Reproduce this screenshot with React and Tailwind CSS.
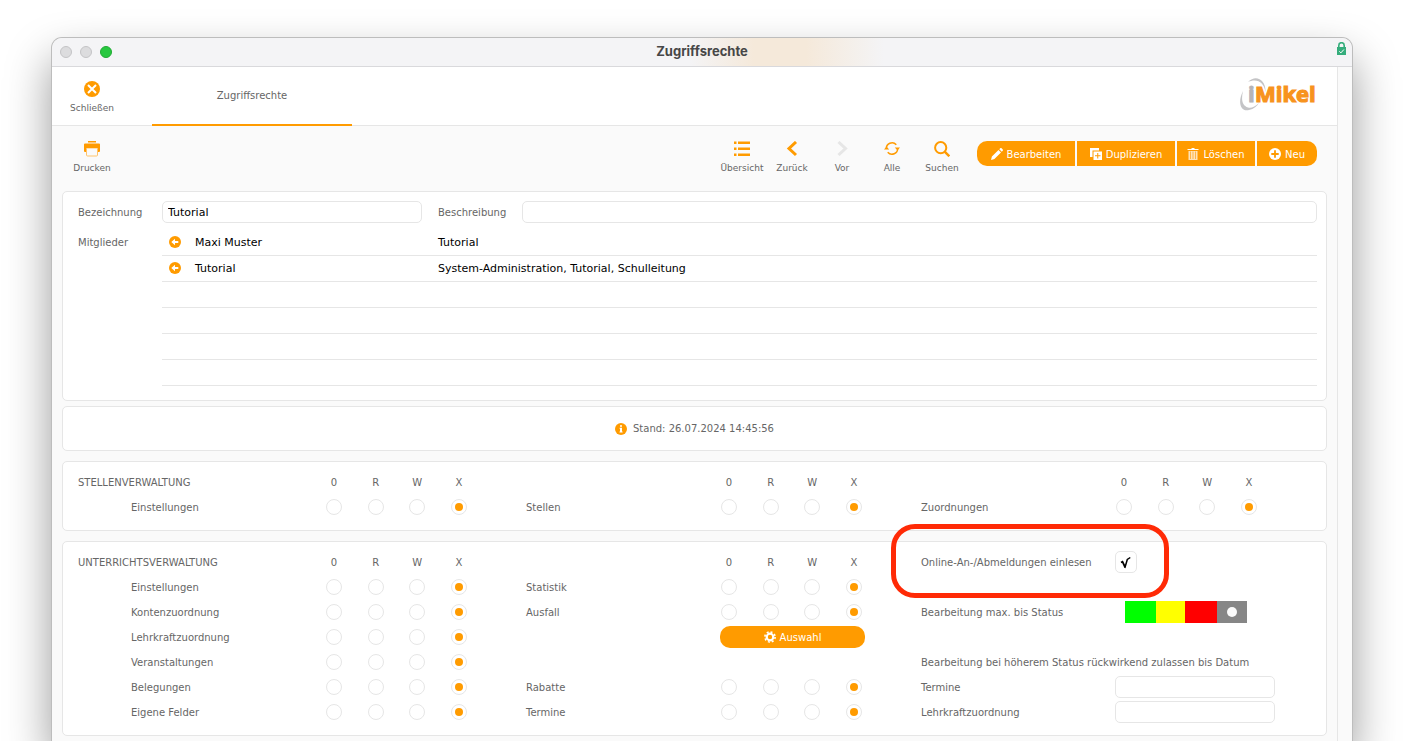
import React, { useState } from 'react'
import clsx from 'clsx'

const LEVELS = ['0', 'R', 'W', 'X']

const members = [
  { name: 'Maxi Muster', groups: 'Tutorial' },
  { name: 'Tutorial', groups: 'System-Administration, Tutorial, Schulleitung' },
  null,
  null,
  null,
  null
]

const statusColors = [
  { id: 'grün', className: 'w-[31px] bg-[#00ff00]' },
  { id: 'gelb', className: 'w-[29px] bg-[#ffff00]' },
  { id: 'rot', className: 'w-8 bg-[#ff0000]' },
  { id: 'grau', className: 'w-[30px] bg-[#868686]' }
]

function CloseIcon() {
  return (
    <svg viewBox="0 0 16 16" className="size-4">
      <circle cx="8" cy="8" r="8" fill="#ff9b00" />
      <path d="M4 4l8 8M12 4l-8 8" stroke="#fff" strokeWidth="2" />
    </svg>
  )
}

function PrintIcon() {
  return (
    <svg viewBox="0 0 16 16" className="size-4">
      <path d="M4 0h8v1.500H4z" fill="#ff9b00" />
      <path d="M1 2.500h14a1 1 0 0 1 1 1V10a1 1 0 0 1-1 1H1a1 1 0 0 1-1-1V3.500a1 1 0 0 1 1-1z" fill="#ff9b00" />
      <path d="M2.500 7h11v7a1 1 0 0 1-1 1h-9a1 1 0 0 1-1-1z" fill="#fafafa" stroke="#ffc46b" />
      <path d="M2 6.500h12" stroke="#ff9b00" />
    </svg>
  )
}

function ListIcon() {
  return (
    <svg viewBox="0 0 16 16" className="size-4" fill="#ff9b00">
      <path d="M0 .5h2.500V3H0zM4 .5h12V3H4zM0 6.500h2.500V9H0zM4 6.500h12V9H4zM0 12.500h2.500V15H0zM4 12.500h12V15H4z" />
    </svg>
  )
}

function ChevronIcon({ next = false }) {
  return (
    <svg viewBox="0 0 16 16" className="size-4" fill="none" strokeWidth="3">
      {next
        ? <path d="M4.500 1L11.500 7.500l-7 6.500" stroke="#e6e6e6" />
        : <path d="M12 1L5 7.500l7 6.500" stroke="#ff9b00" />}
    </svg>
  )
}

function ReloadIcon() {
  return (
    <svg viewBox="0 0 16 16" className="size-4" fill="none" stroke="#ff9b00" strokeWidth="1.500">
      <path d="M2.400 8A5.700 5.700 0 0 1 12.300 3.700M13.600 7A5.700 5.700 0 0 1 3.700 11.300" />
      <path d="M0 8.500l2.500-3 2.700 3zM10.800 6.500l2.700 3L16 6.500z" fill="#ff9b00" stroke="none" />
    </svg>
  )
}

function SearchIcon() {
  return (
    <svg viewBox="0 0 16 16" className="size-4" fill="none" stroke="#ff9b00" strokeWidth="2">
      <circle cx="6.700" cy="6.700" r="5.600" />
      <path d="M10.700 10.700l4.600 4.600" strokeWidth="2.400" />
    </svg>
  )
}

function PencilIcon() {
  return (
    <svg viewBox="0 0 12 12" className="size-3" fill="#fff">
      <path d="M0 12l.9-3.400 6.600-6.600 2.500 2.500L3.400 11.100zM8.300 1.200L9.200.3a1 1 0 0 1 1.400 0l1.100 1.100a1 1 0 0 1 0 1.400l-.9.9z" />
    </svg>
  )
}

function DuplicateIcon() {
  return (
    <svg viewBox="0 0 12 12" className="size-3">
      <path d="M0 0h9v2.500H2.500V9H0z" fill="#fff" />
      <path d="M3.500 3.500H12V12H3.500z" fill="#fff" />
      <path d="M7.750 5v5.500M5 7.750h5.500" stroke="#ff9b00" />
    </svg>
  )
}

function TrashIcon() {
  return (
    <svg viewBox="0 0 12 12" className="size-3">
      <path d="M.5 1.500h11M4.500.5h3" stroke="#fff" />
      <path d="M1.500 3h9v9h-9z" fill="#ffe3b8" />
      <path d="M3.500 3.500V11M6 3.500V11M8.500 3.500V11" stroke="#ffb545" />
    </svg>
  )
}

function PlusIcon() {
  return (
    <svg viewBox="0 0 12 12" className="size-3">
      <circle cx="6" cy="6" r="6" fill="#fff" />
      <path d="M6 2.300v7.400M2.300 6h7.400" stroke="#ff9b00" strokeWidth="1.800" />
    </svg>
  )
}

function BackIcon() {
  return (
    <svg viewBox="0 0 12 12" className="size-3">
      <circle cx="6" cy="6" r="6" fill="#ff9b00" />
      <path d="M2.300 6L6 2.800V5h3.300v2H6v2.200z" fill="#fff" />
    </svg>
  )
}

function InfoIcon() {
  return (
    <svg viewBox="0 0 12 12" className="size-3">
      <circle cx="6" cy="6" r="6" fill="#ff9b00" />
      <path d="M5 2.200h2v1.600H5zM4.600 4.800H7v3.700h.6v1H4.500v-1H5V5.800h-.4z" fill="#fff" />
    </svg>
  )
}

function GearIcon() {
  return (
    <svg viewBox="0 0 12 12" className="size-3" fill="none" stroke="#fff">
      <circle cx="6" cy="6" r="3.300" strokeWidth="2.200" />
      <circle cx="6" cy="6" r="5.100" strokeWidth="1.600" strokeDasharray="2 2" />
    </svg>
  )
}

function LockIcon() {
  return (
    <svg viewBox="0 0 9 13" className="h-[13px] w-[9px]">
      <path d="M1.800 6V3.400a2.700 2.700 0 0 1 5.400 0V6" fill="none" stroke="#35ad7c" strokeWidth="1.600" />
      <path d="M0 5h9v8H0z" fill="#35ad7c" />
      <path d="M2.300 9.300l1.600 1.600 3-3.400" fill="none" stroke="#fff" />
    </svg>
  )
}

function Logo() {
  return (
    <svg viewBox="0 0 77 36" className="h-9 w-[77px]" role="img" aria-label="iMikel">
      <path d="M8 6C16-2 26 4 25.500 16 24 6 17 2 8 6z" fill="#c4c4c6" />
      <path d="M3 15C-3 27 1 36 9 34c5-1 8-4 10-7-4 4-8 5.500-11 4.500-6-2-7-8-5-16.500z" fill="#c4c4c6" />
      <text x="8" y="26" fontFamily="Open Sans, sans-serif" fontWeight="700" fontSize="22" fill="#b4b4b8" stroke="#b4b4b8">i</text>
      <text x="15" y="26" fontFamily="Open Sans, sans-serif" fontWeight="700" fontSize="22" fill="#f7931e" stroke="#f7931e" strokeWidth="1.200">Mikel</text>
    </svg>
  )
}

function ToolButton({ icon, children, className, disabled }) {
  return (
    <button type="button" disabled={disabled} className={clsx('flex flex-col items-center gap-[3px] text-[9px] whitespace-nowrap', className)}>
      {icon}
      <span className="leading-4">{children}</span>
    </button>
  )
}

function ActionButton({ icon, children, className }) {
  return (
    <button type="button" className={clsx('flex h-[25px] items-center justify-center gap-1 bg-[#ff9b00] pt-px text-white', className)}>
      {icon}
      {children}
    </button>
  )
}

function Card({ children, className }) {
  return <section className={clsx('rounded-[5px] border border-[#e6e6e6] bg-white', className)}>{children}</section>
}

function TextInput({ className, ...props }) {
  return (
    <input
      type="text"
      className={clsx('h-[22px] rounded-[5px] border border-[#e6e6e6] bg-white px-[5px] pt-px text-[11px] text-black outline-none', className)}
      {...props}
    />
  )
}

function LevelHeader() {
  return (
    <div className="flex h-[25px] items-center">
      <span className="w-[194px]" />
      <div className="flex w-[145px] justify-between pr-[3px] pl-px">
        {LEVELS.map(l => <span key={l} className="w-4 text-center">{l}</span>)}
      </div>
    </div>
  )
}

function RightRow({ name, label }) {
  const [level, setLevel] = useState('X')

  return (
    <div className="flex h-[25px] items-center" role="radiogroup" aria-label={label}>
      <span className="w-[194px]">{label}</span>
      <div className="flex w-[145px] justify-between pr-[3px] pl-px">
        {LEVELS.map(l => (
          <input
            key={l}
            type="radio"
            name={name}
            aria-label={`${label} ${l}`}
            checked={level === l}
            onChange={() => setLevel(l)}
            className="size-4 appearance-none rounded-full border border-[#e6e6e6] bg-white p-[3px] checked:bg-[#ff9b00] checked:bg-clip-content"
          />
        ))}
      </div>
    </div>
  )
}

function StatusPicker() {
  const [status, setStatus] = useState('grau')

  return (
    <div className="flex h-[25px] items-center" role="radiogroup" aria-label="Bearbeitung max. bis Status">
      <span className="w-[204px]">Bearbeitung max. bis Status</span>
      {statusColors.map(s => (
        <label key={s.id} className={clsx('flex h-[22px] items-center justify-center', s.className)}>
          <input
            type="radio"
            name="status"
            aria-label={s.id}
            checked={status === s.id}
            onChange={() => setStatus(s.id)}
            className="size-[10px] appearance-none rounded-full checked:bg-[#fafafa]"
          />
        </label>
      ))}
    </div>
  )
}

export default function App() {
  const [online, setOnline] = useState(true)

  return (
    <div className="flex min-h-screen flex-col bg-white pt-[37px] pr-[55px] pl-[51px] font-['DejaVu_Sans',sans-serif] text-[10px] text-[#666]">
      <div className="flex flex-1 flex-col rounded-t-[11px] border border-b-0 border-[#bdbdbd] bg-[#fafafa] shadow-[0_22px_45px_rgba(0,0,0,0.4)]">
        <header className="relative flex h-[29px] items-center justify-center rounded-t-[10px] border-b border-[#d9d9dc] bg-[#f4f4f6] bg-[linear-gradient(90deg,transparent_49%,#f5e9da_54%,#f5e9da_58%,transparent_64%)]">
          <div className="absolute left-2 flex gap-2">
            <span className="size-3 rounded-full border border-[#c4c4c6] bg-[#dcdcde]" />
            <span className="size-3 rounded-full border border-[#c4c4c6] bg-[#dcdcde]" />
            <span className="size-3 rounded-full border border-[#1faa33] bg-[#28c840]" />
          </div>
          <h1 className="font-['Inter',sans-serif] text-[13px] font-bold text-[#474747]">Zugriffsrechte</h1>
          <div className="absolute top-1 right-[6px]"><LockIcon /></div>
        </header>

        <div className="flex flex-1">
          <main className="min-w-0 flex-1 border-r border-[#e6e6e6]">
            <nav className="flex h-[59px] border-b border-[#e6e6e6] bg-white">
              <ToolButton icon={<CloseIcon />} className="mt-[14px] w-20 self-start">Schließen</ToolButton>
              <a href="#rechte" className="-mb-px ml-5 flex w-[200px] items-center justify-center border-b-2 border-[#ff9b00]">
                Zugriffsrechte
              </a>
              <div className="ml-auto pt-[9px] pr-5"><Logo /></div>
            </nav>

            <div className="flex h-[65px] items-start pt-[15px] pr-5">
              <ToolButton icon={<PrintIcon />} className="w-20">Drucken</ToolButton>
              <div className="ml-auto flex">
                <ToolButton icon={<ListIcon />} className="w-[50px]">Übersicht</ToolButton>
                <ToolButton icon={<ChevronIcon />} className="w-[50px]">Zurück</ToolButton>
                <ToolButton icon={<ChevronIcon next />} className="w-[50px]">Vor</ToolButton>
                <ToolButton icon={<ReloadIcon />} className="w-[50px]">Alle</ToolButton>
                <ToolButton icon={<SearchIcon />} className="w-[50px]">Suchen</ToolButton>
              </div>
              <div className="ml-[10px] flex gap-[2px]">
                <ActionButton icon={<PencilIcon />} className="w-[98px] rounded-l-[10px]">Bearbeiten</ActionButton>
                <ActionButton icon={<DuplicateIcon />} className="w-[98px]">Duplizieren</ActionButton>
                <ActionButton icon={<TrashIcon />} className="w-[78px]">Löschen</ActionButton>
                <ActionButton icon={<PlusIcon />} className="w-[60px] rounded-r-[10px]">Neu</ActionButton>
              </div>
            </div>

            <div className="px-[10px]">
              <Card className="pt-[9px] pr-[9px] pb-[14px] pl-[15px]">
                <div className="flex items-center">
                  <label htmlFor="bezeichnung" className="w-[84px]">Bezeichnung</label>
                  <TextInput id="bezeichnung" defaultValue="Tutorial" className="w-[260px]" />
                  <label htmlFor="beschreibung" className="ml-4 w-[84px]">Beschreibung</label>
                  <TextInput id="beschreibung" className="min-w-0 flex-1" />
                </div>
                <div className="mt-[6px] flex">
                  <span className="w-[84px] leading-7">Mitglieder</span>
                  <table className="flex-1 table-fixed text-[11px] text-black" aria-label="Mitglieder">
                    <colgroup>
                      <col className="w-[33px]" />
                      <col className="w-[243px]" />
                      <col />
                    </colgroup>
                    <tbody>
                      {members.map((m, i) => (
                        <tr key={i} className="h-[26px] border-b border-[#e6e6e6]">
                          <td className="pl-[7px]">
                            {m && <button type="button" aria-label={`${m.name} öffnen`} className="block"><BackIcon /></button>}
                          </td>
                          <td className="pt-[2px]">{m?.name}</td>
                          <td className="pt-[2px]">{m?.groups}</td>
                        </tr>
                      ))}
                    </tbody>
                  </table>
                </div>
              </Card>

              <Card className="mt-[5px] flex h-[45px] items-center justify-center gap-[6px] pt-px">
                <InfoIcon />
                <span>Stand: 26.07.2024 14:45:56</span>
              </Card>

              <Card className="mt-[10px] grid grid-cols-[53px_1fr_1fr_1fr] pt-2 pr-[10px] pb-[10px] pl-[15px]">
                <div className="col-span-2 flex">
                  <h2 className="w-[53px] leading-[25px] whitespace-nowrap">STELLENVERWALTUNG</h2>
                  <LevelHeader />
                </div>
                <LevelHeader />
                <LevelHeader />
                <div className="col-start-2"><RightRow name="stellen-einstellungen" label="Einstellungen" /></div>
                <RightRow name="stellen" label="Stellen" />
                <RightRow name="zuordnungen" label="Zuordnungen" />
              </Card>

              <Card className="mt-[10px] grid grid-cols-[53px_1fr_1fr_1fr] pt-2 pr-[10px] pb-[10px] pl-[15px]">
                <div className="col-span-2">
                  <div className="flex">
                    <h2 className="w-[53px] leading-[25px] whitespace-nowrap">UNTERRICHTSVERWALTUNG</h2>
                    <LevelHeader />
                  </div>
                  <div className="pl-[53px]">
                    <RightRow name="einstellungen" label="Einstellungen" />
                    <RightRow name="konten" label="Kontenzuordnung" />
                    <RightRow name="lehrkraft" label="Lehrkraftzuordnung" />
                    <RightRow name="veranstaltungen" label="Veranstaltungen" />
                    <RightRow name="belegungen" label="Belegungen" />
                    <RightRow name="felder" label="Eigene Felder" />
                  </div>
                </div>
                <div>
                  <LevelHeader />
                  <RightRow name="statistik" label="Statistik" />
                  <RightRow name="ausfall" label="Ausfall" />
                  <div className="flex h-[50px] items-start pt-px pl-[194px]">
                    <button type="button" className="flex h-[22px] w-[145px] items-center justify-center gap-1 rounded-[10px] bg-[#ff9b00] pt-px text-white">
                      <GearIcon />
                      Auswahl
                    </button>
                  </div>
                  <RightRow name="rabatte" label="Rabatte" />
                  <RightRow name="termine" label="Termine" />
                </div>
                <div>
                  <div className="relative mb-[25px] flex h-[25px] items-center">
                    <label htmlFor="online" className="w-[194px]">Online-An-/Abmeldungen einlesen</label>
                    <span className="relative flex">
                      <input
                        id="online"
                        type="checkbox"
                        checked={online}
                        onChange={e => setOnline(e.target.checked)}
                        className="size-[22px] appearance-none rounded-[5px] border border-[#e6e6e6] bg-white"
                      />
                      {online && (
                        <svg viewBox="0 0 22 22" className="pointer-events-none absolute inset-0 size-[22px]" fill="none" stroke="#000">
                          <path d="M6 11.500l1.500-.8L10 16" strokeWidth="1.800" />
                          <path d="M9.800 17L12.300 8.500 15.300 6.500" strokeWidth="1.500" />
                        </svg>
                      )}
                    </span>
                    {/* highlight frame around the option */}
                    <div className="pointer-events-none absolute -top-[26px] -left-[30px] h-[74px] w-[278px] rounded-[24px] border-[5px] border-[#ff2a06]" />
                  </div>
                  <StatusPicker />
                  <p className="mt-[25px] leading-[25px] whitespace-nowrap">Bearbeitung bei höherem Status rückwirkend zulassen bis Datum</p>
                  <div className="flex h-[25px] items-center">
                    <label htmlFor="datum-termine" className="w-[194px]">Termine</label>
                    <TextInput id="datum-termine" className="w-40" />
                  </div>
                  <div className="flex h-[25px] items-center">
                    <label htmlFor="datum-lehrkraft" className="w-[194px]">Lehrkraftzuordnung</label>
                    <TextInput id="datum-lehrkraft" className="w-40" />
                  </div>
                </div>
              </Card>
            </div>
          </main>
          <div className="w-[14px]" />
        </div>
      </div>
    </div>
  )
}
